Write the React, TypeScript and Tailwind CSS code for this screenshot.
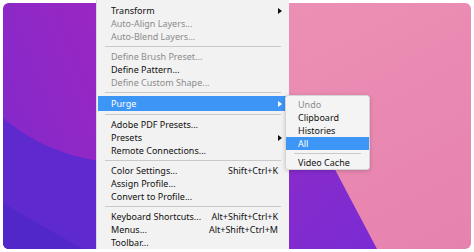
import React from "react";

type Item =
  | { t: "sep" }
  | { t: "item"; label: string; disabled?: boolean; sub?: boolean; sc?: string; hl?: boolean };

const main: Item[] = [
  { t: "item", label: "Transform", sub: true },
  { t: "item", label: "Auto-Align Layers...", disabled: true },
  { t: "item", label: "Auto-Blend Layers...", disabled: true },
  { t: "sep" },
  { t: "item", label: "Define Brush Preset...", disabled: true },
  { t: "item", label: "Define Pattern..." },
  { t: "item", label: "Define Custom Shape...", disabled: true },
  { t: "sep" },
  { t: "item", label: "Purge", sub: true, hl: true },
  { t: "sep" },
  { t: "item", label: "Adobe PDF Presets..." },
  { t: "item", label: "Presets", sub: true },
  { t: "item", label: "Remote Connections..." },
  { t: "sep" },
  { t: "item", label: "Color Settings...", sc: "Shift+Ctrl+K" },
  { t: "item", label: "Assign Profile..." },
  { t: "item", label: "Convert to Profile..." },
  { t: "sep" },
  { t: "item", label: "Keyboard Shortcuts...", sc: "Alt+Shift+Ctrl+K" },
  { t: "item", label: "Menus...", sc: "Alt+Shift+Ctrl+M" },
  { t: "item", label: "Toolbar..." },
];

const sub: Item[] = [
  { t: "item", label: "Undo", disabled: true },
  { t: "item", label: "Clipboard" },
  { t: "item", label: "Histories" },
  { t: "item", label: "All", hl: true },
  { t: "sep" },
  { t: "item", label: "Video Cache" },
];

function Arrow({ white }: { white?: boolean }) {
  return (
    <svg width="4" height="6" viewBox="0 0 4 6" className="shrink-0">
      <path d="M0 0 L4 3 L0 6 Z" fill={white ? "#ffffff" : "#111111"} />
    </svg>
  );
}

function Wallpaper() {
  return (
    <svg width="468" height="246" viewBox="0 0 468 246" className="block">
      <defs>
        <linearGradient id="pink" x1="0" y1="0" x2="1" y2="1">
          <stop offset="0" stopColor="#ef95b8" />
          <stop offset="1" stopColor="#e682ae" />
        </linearGradient>
        <linearGradient id="lp" x1="1" y1="0" x2="0" y2="1">
          <stop offset="0" stopColor="#9a27c2" />
          <stop offset="1" stopColor="#7f29cc" />
        </linearGradient>
        <linearGradient id="rp" x1="0" y1="0" x2="1" y2="1">
          <stop offset="0" stopColor="#8a2bc9" />
          <stop offset="1" stopColor="#7a2bd4" />
        </linearGradient>
      </defs>
      <rect x="0" y="0" width="468" height="246" fill="url(#pink)" />
      <rect x="0" y="0" width="96" height="246" fill="url(#lp)" />
      <path d="M0 115 C30 140 60 152 96 158 L96 246 L0 246 Z" fill="#5e2ad0" />
      <path d="M0 200 C25 215 55 232 80 246 L0 246 Z" fill="#5127c9" />
      <path d="M280 140 L318 140 L374 246 L280 246 Z" fill="url(#rp)" />
    </svg>
  );
}

const font = { fontFamily: '"Noto Sans", "Open Sans", sans-serif' };

export default function App() {
  return (
    <div className="relative w-[474px] h-[252px] bg-white overflow-hidden" style={font}>
      <div className="absolute left-[3px] top-[3px] w-[468px] h-[246px] rounded-[6px] overflow-hidden">
        <Wallpaper />
      </div>

      {/* main menu */}
      <div className="absolute left-[96px] top-0 w-[193px] h-[249px] bg-[#f2f2f2] border-l border-[#d8d8d8] pt-[4px] text-[9px] leading-none">
        {main.map((it, i) =>
          it.t === "sep" ? (
            <div key={i} className="h-[7px] flex items-center px-[8px]">
              <div className="h-px w-full bg-[#c9c9c9]" />
            </div>
          ) : (
            <div
              key={i}
              className={
                "flex items-center pl-[13px] pr-[6px] mx-px " +
                (it.hl ? "h-[15px] bg-[#3d96f5] text-white" : "h-[13px] ") +
                (it.disabled ? "text-[#8c8c8c]" : it.hl ? "" : "text-[#111111]")
              }
            >
              <span className="flex-1 whitespace-nowrap">{it.label}</span>
              {it.sc && <span className="whitespace-nowrap pr-[4px]">{it.sc}</span>}
              {it.sub && <Arrow white={it.hl} />}
            </div>
          )
        )}
      </div>

      {/* submenu */}
      <div className="absolute left-[285px] top-[95px] w-[85px] h-[75px] bg-[#f4f4f4] border border-[#d4d4d4] rounded-[3px] shadow-[0_1px_4px_rgba(0,0,0,0.18)] pt-[2px] text-[9px] leading-none">
        {sub.map((it, i) =>
          it.t === "sep" ? (
            <div key={i} className="h-[6px] flex items-center px-[8px]">
              <div className="h-px w-full bg-[#c9c9c9]" />
            </div>
          ) : (
            <div
              key={i}
              className={
                "flex items-center pl-[12px] h-[13px] " +
                (it.hl ? "bg-[#3d96f5] text-white" : it.disabled ? "text-[#8c8c8c]" : "text-[#111111]")
              }
            >
              <span className="whitespace-nowrap">{it.label}</span>
            </div>
          )
        )}
      </div>
    </div>
  );
}
